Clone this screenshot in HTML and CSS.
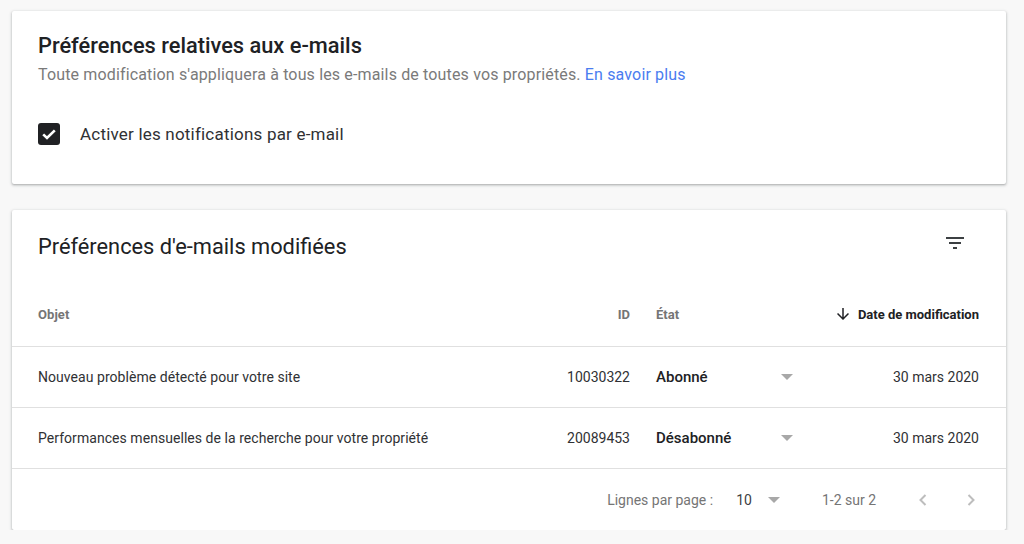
FILE: index.html
```html
<!doctype html>
<html>
  <head>
    <meta charset="utf-8">
    <title>Préférences relatives aux e-mails</title>
    <link rel="stylesheet" href="styles.css">
  </head>
  <body>
    <div class="page">

      <div class="card prefs">
        <h1 class="prefs-title">Préférences relatives aux e-mails</h1>
        <p class="prefs-sub">Toute modification s'appliquera à tous les e-mails de toutes vos propriétés. <a href="#">En savoir plus</a></p>
        <label class="check-row">
          <span class="checkbox">
            <svg width="18" height="18" viewBox="0 0 18 18"><polyline points="3.2,9.4 7,13 14.8,5.4" fill="none" stroke="#fff" stroke-width="2.6"/></svg>
          </span>
          <span class="check-label">Activer les notifications par e-mail</span>
        </label>
      </div>

      <div class="card changes">
        <div class="changes-head">
          <h2 class="changes-title">Préférences d'e-mails modifiées</h2>
          <span class="filter-icon">
            <svg width="24" height="24" viewBox="0 0 24 24"><path d="M10 18h4v-2h-4v2zM3 6v2h18V6H3zm3 7h12v-2H6v2z" fill="#3c4043"/></svg>
          </span>
        </div>

        <div class="grid header">
          <div class="c-obj">Objet</div>
          <div class="c-id">ID</div>
          <div class="c-etat">État</div>
          <div class="c-date sorted">
            <svg width="18" height="18" viewBox="0 0 24 24"><path d="M20 12l-1.41-1.41L13 16.17V4h-2v12.17l-5.58-5.59L4 12l8 8 8-8z" fill="#202124"/></svg>
            Date de modification
          </div>
        </div>

        <div class="grid row">
          <div class="c-obj">Nouveau problème détecté pour votre site</div>
          <div class="c-id">10030322</div>
          <div class="c-etat"><b>Abonné</b><span class="tri"></span></div>
          <div class="c-date">30 mars 2020</div>
        </div>

        <div class="grid row">
          <div class="c-obj">Performances mensuelles de la recherche pour votre propriété</div>
          <div class="c-id">20089453</div>
          <div class="c-etat"><b>Désabonné</b><span class="tri"></span></div>
          <div class="c-date">30 mars 2020</div>
        </div>

        <div class="pager">
          <span class="pager-label">Lignes par page :</span>
          <span class="pager-size">10</span>
          <span class="tri small"></span>
          <span class="pager-range">1-2 sur 2</span>
          <span class="chev">
            <svg width="24" height="24" viewBox="0 0 24 24"><polyline points="14.5,7 9.5,12 14.5,17" fill="none" stroke="#bdbdbd" stroke-width="2"/></svg>
          </span>
          <span class="chev">
            <svg width="24" height="24" viewBox="0 0 24 24"><polyline points="9.5,7 14.5,12 9.5,17" fill="none" stroke="#bdbdbd" stroke-width="2"/></svg>
          </span>
        </div>
      </div>

    </div>
  </body>
</html>
```

FILE: styles.css
```css
html, body {
  margin: 0;
  padding: 0;
  background: #f8f8f8;
  font-family: Roboto, "Liberation Sans", Arial, sans-serif;
  color: #202124;
}

.page {
  padding: 11px 18px 0 12px;
  display: flex;
  flex-direction: column;
  gap: 26px;
}

.card {
  background: #fff;
  border-radius: 2px;
  box-shadow: 0 1px 2px rgba(60,64,67,.3), 0 1px 3px 1px rgba(60,64,67,.12);
}

/* first card */
.prefs {
  padding: 21px 26px 30px 26px;
}
.prefs-title {
  margin: 0;
  font-size: 21.8px;
  font-weight: 500;
  line-height: 28px;
}
.prefs-sub {
  margin: 5px 0 0 0;
  font-size: 16px;
  letter-spacing: 0.15px;
  line-height: 20px;
  color: #7a7a7a;
}
.prefs-sub a {
  color: #4a7cf0;
  text-decoration: none;
}
.check-row {
  margin-top: 29px;
  height: 40px;
  display: flex;
  align-items: center;
}
.checkbox {
  width: 22px;
  height: 22px;
  border-radius: 3px;
  background: #202124;
  display: flex;
  align-items: center;
  justify-content: center;
}
.check-label {
  margin-left: 20px;
  font-size: 17px;
  letter-spacing: 0.2px;
  color: #303134;
}

/* second card */
.changes-head {
  height: 72px;
  padding: 0 39px 0 26px;
  display: flex;
  align-items: center;
  justify-content: space-between;
}
.changes-title {
  margin: 0;
  font-size: 21.8px;
  font-weight: 400;
  color: #202124;
}
.filter-icon {
  display: flex;
  margin-top: -6px;
}

.grid {
  display: grid;
  grid-template-columns: 1fr 80px 170px 179px;
  align-items: center;
  padding: 0 27px 0 26px;
  border-bottom: 1px solid #e0e0e0;
}
.header {
  height: 64px;
  font-size: 13px;
  font-weight: 700;
  color: #757575;
}
.row {
  height: 60px;
  font-size: 14px;
  color: #303134;
}
.c-obj {
  letter-spacing: 0.05px;
}
.c-id, .c-date {
  text-align: right;
}
.c-etat {
  padding-left: 26px;
  padding-right: 7px;
  display: flex;
  align-items: center;
  justify-content: space-between;
}
.c-etat b {
  font-weight: 500;
  font-size: 15px;
  color: #202124;
}
.sorted {
  color: #202124;
  display: flex;
  align-items: center;
  justify-content: flex-end;
  gap: 6px;
}

.tri {
  width: 0;
  height: 0;
  border-left: 6px solid transparent;
  border-right: 6px solid transparent;
  border-top: 6px solid #a8a8a8;
}

.pager {
  height: 61px;
  padding-right: 23px;
  display: flex;
  align-items: center;
  justify-content: flex-end;
  font-size: 14px;
  color: #757575;
}
.pager-size {
  margin-left: 23px;
  font-size: 14px;
  color: #3c4043;
}
.tri.small {
  margin-left: 16px;
}
.pager-range {
  margin-left: 42px;
}
.chev {
  display: flex;
  margin-left: 24px;
}
.pager-range + .chev {
  margin-left: 35px;
}
```
